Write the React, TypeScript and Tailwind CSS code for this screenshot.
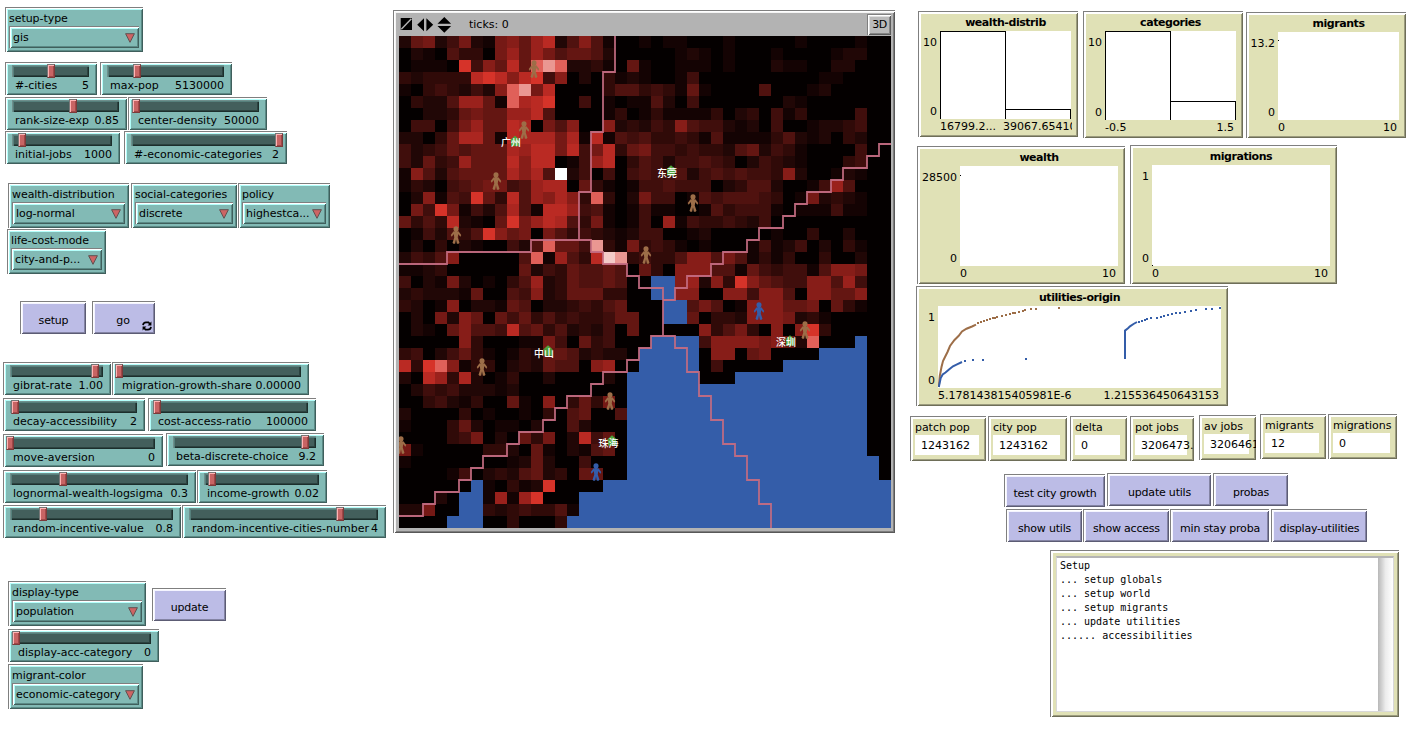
import React from "react";

const BEVEL_TEAL =
  "border-l border-t border-[#7f7f7f] bg-[#82bab5] shadow-[inset_1px_1px_0_#ffffff,inset_-1px_-1px_0_#3f5f5c,inset_2px_2px_0_#b4fffb,inset_-2px_-2px_0_#5b8a86]";
const BEVEL_LAVENDER =
  "border-l border-t border-[#7f7f7f] bg-[#bcbce6] shadow-[inset_1px_1px_0_#ffffff,inset_-1px_-1px_0_#5c5c74,inset_2px_2px_0_#f4f4ff,inset_-2px_-2px_0_#8484a4]";
const BEVEL_KHAKI =
  "border-l border-t border-[#7f7f7f] bg-[#e0e1b6] shadow-[inset_1px_1px_0_#ffffff,inset_-1px_-1px_0_#6e6e58,inset_2px_2px_0_#ffffff,inset_-2px_-2px_0_#9c9c7e]";

function Row({ className, children }: { className: string; children: React.ReactNode }) {
  return <div className={`flex items-start ${className}`}>{children}</div>;
}

function Slider({ label, value, pos, className }: { label: string; value: string; pos: number; className: string }) {
  return (
    <div className={`relative h-[33px] shrink-0 pl-[6px] pr-[8px] pt-[2px] ${BEVEL_TEAL} ${className}`}>
      <div className="h-[12px] border-l border-t border-[#6f8f8c] bg-[#435f5c] shadow-[inset_1px_1px_0_#56807c,inset_-1px_-1px_0_#1c2e2c,inset_-2px_-2px_0_#2c4340]" />
      <div
        className="absolute top-[1px] h-[14px] w-[8px] border border-t-[#777] border-l-[#777] border-r-[#7c3a3a] border-b-[#7c3a3a] bg-[#c86464] shadow-[inset_1px_1px_0_#ffb4b4,inset_-1px_-1px_0_#a04848]"
        style={{ left: pos - 1 }}
      />
      <div className="flex justify-between whitespace-nowrap pl-[3px] pt-[2px] leading-[14px] tracking-normal">
        <span>{label}</span>
        <span>{value}</span>
      </div>
    </div>
  );
}

function Chooser({ label, value, className }: { label: string; value: string; className: string }) {
  return (
    <div className={`h-[45px] shrink-0 px-[3px] pr-[4px] pt-[3px] ${BEVEL_TEAL} ${className}`}>
      <div className="h-[15px] pt-px leading-[14px]">{label}</div>
      <div className={`flex h-[22px] items-start justify-between pl-[3px] pr-[4px] ${BEVEL_TEAL}`}>
        <span className="mt-[4px] leading-[14px]">{value}</span>
        <svg className="mt-[6px] shrink-0" width="10" height="10" viewBox="0 0 10 10">
          <path d="M0.6 0.7H9.4L5 9.3Z" fill="#cd6464" stroke="#5f5050" />
        </svg>
      </div>
    </div>
  );
}

function Button({ label, className, children }: { label: string; className: string; children?: React.ReactNode }) {
  return (
    <button
      type="button"
      className={`relative flex h-[33px] shrink-0 items-center justify-center whitespace-nowrap pt-[5px] leading-[14px] tracking-[-0.2px] ${BEVEL_LAVENDER} ${className}`}
    >
      {label}
      {children}
    </button>
  );
}

function Monitor({ label, value, className }: { label: string; value: string; className: string }) {
  return (
    <div className={`h-[45px] shrink-0 overflow-hidden pl-[4px] pr-[7px] pt-[3px] ${BEVEL_KHAKI} ${className}`}>
      <div className="h-[15px] whitespace-nowrap pt-px leading-[14px]">{label}</div>
      <div className="h-[20px] whitespace-nowrap bg-white pl-[6px] pt-[4px] leading-[14px] tracking-normal">{value}</div>
    </div>
  );
}

type PlotProps = {
  title: string;
  yMax: string;
  yMin: string;
  xMin: string;
  xMax: string;
  className: string;
  axis: string;
  xEnd?: string;
  children?: React.ReactNode;
};

function Plot({ title, yMax, yMin, xMin, xMax, className, axis, xEnd = "mr-[9px]", children }: PlotProps) {
  return (
    <div className={`flex shrink-0 overflow-hidden ${BEVEL_KHAKI} ${className}`}>
      <div className={`flex shrink-0 flex-col items-end justify-between pb-[18px] pr-[3px] pt-[24px] leading-[14px] tracking-normal ${axis}`}>
        <span>{yMax}</span>
        <span>{yMin}</span>
      </div>
      <div className="flex min-w-0 grow flex-col">
        <div className="mr-[7px] h-[19px] shrink-0 pt-[4px] text-center font-bold leading-[14px] tracking-[-0.45px]">{title}</div>
        <div className="mr-[7px] flex grow items-end bg-white">{children}</div>
        <div className={`flex h-[18px] shrink-0 justify-between overflow-hidden whitespace-nowrap pt-[1px] leading-[14px] tracking-normal ${xEnd}`}>
          <span>{xMin}</span>
          <span>{xMax}</span>
        </div>
      </div>
    </div>
  );
}

const CELLS = [
  "267247217869b25851001" + "01100010000010000100",
  "021053307969756652000" + "00121010001000012200",
  "01110c486b6ded2231061" + "00111010002110022000",
  "323333bcb8bc480203121" + "00140000000000110000",
  "103432428de7b00003553" + "43161000050001200000",
  "032259961dabc00401011" + "52040000000210000000",
  "00223676699b500001301" + "31111302304130000400",
  "044047966ba0758008232" + "43854421204001223400",
  "22036aa61baaa7a1b1545" + "33431511113521203200",
  "423465666a9bb7b47b367" + "44343325624310000400",
  "426349666b8bb0149b035" + "42445430243210003400",
  "185256666a8a5f2404045" + "44524545443820012100",
  "132045677459aa0631014" + "45444023552001495000",
  "028154c63b598a83d3027" + "44015455543017232100",
  "074c71425a51bb9451014" + "11001534441011141100",
  "6353b2106c79ba5371014" + "09143343240000000000",
  "0142535c8670753432124" + "40012000001003002000",
  "020302100425d664e3173" + "43101000141240203100",
  "24358000005d1953bwe34" + "33588575131300300200",
  "112300000062436556506" + "30888551643441588700",
  "402172010359236556500" + "BB89283c865448859400",
  "232221600548236663300" + "BB880088488508866800",
  "320180221650223435600" + "0BB57501888667063100",
  "020728606463534334660" + "0BB60332888723100000",
  "021068554b56352324060" + "0000835730808c300000",
  "000008300011740634000" + "BBBB48888786" + "2d000B00",
  "34024631013266523220B" + "BBBB0880670000BBBB00",
  "b3cd8133023265508900B" + "BBBB0400000BBBBBBB00",
  "20b93a2013002000020BB" + "BBBB000BBBBBBBBBBB00",
  "0243422212000000000BB" + "BBBBBBBBBBBBBBBBBB00",
  "0034213006108036370BB" + "BBBBBBBBBBBBBBBBBB00",
  "2000030100103056005BB" + "BBBBBBBBBBBBBBBBBB00",
  "1000362011020052000BB" + "BBBBBBBBBBBBBBBBBB00",
  "000034702063702b460BB" + "BBBBBBBBBBBBBBBBBB00",
  "7100000332061021560BB" + "BBBBBBBBBBBBBBBBBB00",
  "1000000001262004000BB" + "BBBBBBBBBBBBBBBBBBB0",
  "0000140232562306600BB" + "BBBBBBBBBBBBBBBBBBB0",
  "000000B10312c0000BBBB" + "BBBBBBBBBBBBBBBBBBBB",
  "00020BB1919c000BBBBBB" + "BBBBBBBBBBBBBBBBBBBB",
  "22700BB32343351BBBBBB" + "BBBBBBBBBBBBBBBBBBBB",
  "0000BBB0030003BBBBBBB" + "BBBBBBBBBBBBBBBBBBBB",
];

const SHADES: Record<string, string> = {
  "0": "#040000",
  "1": "#140303",
  "2": "#210706",
  "3": "#300a08",
  "4": "#400e0c",
  "5": "#50120f",
  "6": "#641612",
  "7": "#751915",
  "8": "#871d18",
  "9": "#9a211c",
  a: "#ab2620",
  b: "#ba2a23",
  c: "#d63329",
  d: "#e06059",
  e: "#ea9792",
  w: "#f4cbc8",
  f: "#ffffff",
  B: "#345da9",
};

const BORDERS = [
  "18,0 18,3 17,3 17,8 16,8 16,13 15,13 15,17",
  "0,19 4,19 4,18 11,18 11,17 16,17 16,18 17,18 17,19 19,19 19,20 20,20 20,21 22,21 22,25",
  "22,22 23,22 23,21 24,21 24,20 26,20 26,19 27,19 27,18 29,18 29,17 30,17 30,16 32,16 32,15 33,15 33,14 34,14 34,13 36,13 36,12 37,12 37,11 39,11 39,10 40,10 40,9 41,9",
  "0,40 2,40 2,39 3,39 3,38 5,38 5,37 6,37 6,36 7,36 7,35 9,35 9,34 10,34 10,33 12,33 12,32 13,32 13,31 14,31 14,30 16,30 16,29 17,29 17,28 19,28 19,27 20,27 20,26 21,26 21,25 23,25 23,26 24,26 24,28 25,28 25,30 26,30 26,32 27,32 27,34 28,34 28,35 29,35 29,37 30,37 30,39 31,39 31,41",
];

const BROWN = "#9d6e48";
const BLUE = "#345da9";

const MIGRANTS: [number, number, string][] = [
  [135, 33, BROWN],
  [125, 94, BROWN],
  [97, 145, BROWN],
  [57, 199, BROWN],
  [247, 219, BROWN],
  [294, 167, BROWN],
  [360, 275, BLUE],
  [406, 294, BROWN],
  [83, 331, BROWN],
  [211, 365, BROWN],
  [2, 409, BROWN],
  [197, 436, BLUE],
];

const CITIES: [string, number, number, number, number][] = [
  ["广州", 116, 105, 112, 109.5],
  ["东莞", 272, 134.5, 268, 141],
  ["中山", 149, 314.5, 145, 321],
  ["珠海", 213, 404.5, 209.5, 411],
  ["深圳", 391, 304.5, 387, 310],
];

function Person({ x, y, color }: { x: number; y: number; color: string }) {
  return (
    <g transform={`translate(${x - 8.7} ${y - 8.7}) scale(0.058)`} fill={color}>
      <circle cx="150" cy="45" r="44" />
      <path d="M105 90 120 195 90 285 105 300H135L150 225 165 300H195L210 285 180 195 195 90Z" />
      <path d="M127 75H172V98H127Z" />
      <path d="M195 90 240 150 225 180 165 105Z" />
      <path d="M105 90 60 150 75 180 135 105Z" />
    </g>
  );
}

function WorldMap() {
  return (
    <svg className="block" width="492" height="492" viewBox="0 0 492 492">
      <rect width="492" height="492" fill="#040000" />
      <g shapeRendering="crispEdges">
        {CELLS.map((row, r) =>
          row.split("").map((c, i) =>
            c === "0" ? null : <rect key={`${r}-${i}`} x={i * 12} y={r * 12} width="12" height="12" fill={SHADES[c]} />
          )
        )}
      </g>
      <g transform="scale(12)" fill="none" stroke="#c46c82" strokeOpacity="0.95" strokeWidth="0.15">
        {BORDERS.map((points) => (
          <polyline key={points} points={points} />
        ))}
      </g>
      {CITIES.map(([name, hx, hy]) => (
        <g key={name} transform={`translate(${hx - 5.7} ${hy - 5.7}) scale(0.038)`} fill="#4fa33c">
          <path d="M45 120H255V285H45Z" />
          <path d="M15 130 150 10 285 130Z" />
        </g>
      ))}
      {MIGRANTS.map(([x, y, color]) => (
        <Person key={`${x}-${y}`} x={x} y={y} color={color} />
      ))}
      {CITIES.map(([name, , , lx, ly]) => (
        <text
          key={name}
          x={lx}
          y={ly}
          fill="#ffffff"
          textAnchor="middle"
          className="font-['Noto_Sans_CJK_SC',sans-serif] text-[10px] font-medium tracking-normal"
        >
          {name}
        </text>
      ))}
    </svg>
  );
}

function World() {
  return (
    <div className="mt-[10px] h-[523px] w-[502px] shrink-0 border-l border-t border-[#7f7f7f] bg-[#b3b3b3] pl-[5px] pr-[4px] pt-[2px] shadow-[inset_1px_1px_0_#ffffff,inset_-1px_-1px_0_#585858,inset_2px_2px_0_#f4f4f4,inset_-2px_-2px_0_#7d7d7d]">
      <div className="flex h-[23px] items-start">
        <svg className="mt-[4px] block" width="54" height="16" viewBox="0 0 54 16">
          <rect x="1.7" y="1" width="11.3" height="12" />
          <path d="M2.3 12.3 12.4 1.7" stroke="#b3b3b3" strokeWidth="1.4" />
          <path d="M25 1.2V14.3L18.2 7.75ZM27.4 1.2V14.3L34.2 7.75Z" />
          <path d="M38.5 6.7 45.3 0 52.1 6.7ZM38.5 9H52.1L45.3 15.7Z" />
        </svg>
        <span className="ml-[16px] mt-[5px] leading-[14px] tracking-normal">ticks: 0</span>
        <button
          type="button"
          className="ml-auto mt-[1px] h-[21px] w-[24px] border-l border-t border-[#7f7f7f] bg-[#bababa] leading-[18px] tracking-[-0.4px] shadow-[inset_1px_1px_0_#ffffff,inset_-1px_-1px_0_#5c5c5c,inset_2px_2px_0_#dedede,inset_-2px_-2px_0_#858585]"
        >
          3D
        </button>
      </div>
      <WorldMap />
    </div>
  );
}

const path = (s: string) => s.split(" ").map((p) => p.split(",").map(Number) as [number, number]);

const CURVES = [
  {
    color: BROWN,
    line: "0.8,81 1.8,70 3.5,61 5,55 7,51 9.5,46 12,40 16.5,34 20.5,30 24,25.5 28.5,22.7 34,20.5 38,18.7",
    dots: path("40,16.5 43,15.5 45.5,15 49,14 52,12.5 54.5,11.8 57,11.6 59,11 64,9.7 68,8.7 72,7.7 75,7 77,6.6 81,5.7 85,4.7 87,3.8 93,3 98,3 121,2"),
  },
  {
    color: BLUE,
    line: "0.8,81 2.7,72 4.7,68.5 7.5,66.5 11,63.5 15,60.3 19,58.3 24,56",
    dots: path("27,54.6 35,54 45,54 88,53"),
  },
  {
    color: BLUE,
    line: "187,53 187,24.6 190,22.3 192,20.3 195.5,18 199,16",
    dots: path("201,16 204,15 206.5,13.7 209,12.7 213,12 219,12 223,11 226,9.7 230,8.7 234,7.7 238,7 242,7 247,6 253,5 258,4 268,3 274,3 282,2"),
  },
];

function UtilityCurves() {
  return (
    <svg className="block" width="283" height="82" viewBox="0 0 283 82">
      {CURVES.map((c, i) => (
        <g key={i}>
          <polyline points={c.line} fill="none" stroke={c.color} strokeWidth="2" />
          {c.dots.map(([x, y]) => (
            <rect key={x} x={Math.round(x) - 1} y={Math.round(y) - 1} width="2" height="2" fill={c.color} />
          ))}
        </g>
      ))}
    </svg>
  );
}

const LOG = ["Setup", "... setup globals", "... setup world", "... setup migrants", "... update utilities", "...... accessibilities"];

export default function App() {
  return (
    <div className="flex h-[729px] w-[1415px] items-start overflow-hidden bg-white font-['DejaVu_Sans','Noto_Sans_CJK_SC',sans-serif] text-[11px] tracking-[-0.05px] text-black">
      <div className="w-[393px] shrink-0">
        <Row className="mt-[7px]">
          <Chooser label="setup-type" value="gis" className="ml-[5px] w-[138px]" />
        </Row>
        <Row className="mt-[10px]">
          <Slider label="#-cities" value="5" pos={42} className="ml-[5px] w-[92px]" />
          <Slider label="max-pop" value="5130000" pos={33} className="ml-[3px] w-[132px]" />
        </Row>
        <Row className="mt-[2px]">
          <Slider label="rank-size-exp" value="0.85" pos={64} className="ml-[5px] w-[122px]" />
          <Slider label="center-density" value="50000" pos={4} className="ml-[1px] w-[139px]" />
        </Row>
        <Row className="mt-[1px]">
          <Slider label="initial-jobs" value="1000" pos={13} className="ml-[5px] w-[115px]" />
          <Slider label="#-economic-categories" value="2" pos={151} className="ml-[4px] w-[163px]" />
        </Row>
        <Row className="mt-[19px]">
          <Chooser label="wealth-distribution" value="log-normal" className="ml-[8px] w-[121px]" />
          <Chooser label="social-categories" value="discrete" className="ml-[2px] w-[106px]" />
          <Chooser label="policy" value="highestca..." className="ml-[1px] w-[92px]" />
        </Row>
        <Row className="mt-[1px]">
          <Chooser label="life-cost-mode" value="city-and-p..." className="ml-[7px] w-[99px]" />
        </Row>
        <Row className="mt-[27px]">
          <Button label="setup" className="ml-[20px] w-[66px]" />
          <Button label="go" className="ml-[6px] w-[63px] pr-[2px]">
            <svg className="absolute bottom-[3px] right-[3px]" width="10" height="10" viewBox="0 0 10 10" fill="none" stroke="#000" strokeWidth="1.7">
              <path d="M1 4.2C1.3 2 2.5 1.4 4 1.4H6.5L8 3M9 5.8C8.7 8 7.5 8.6 6 8.6H3.5L2 7" />
              <path d="M5.6 4.4H9.4V0.6ZM4.4 5.6H0.6V9.4Z" fill="#000" stroke="none" />
            </svg>
          </Button>
        </Row>
        <Row className="mt-[28px]">
          <Slider label="gibrat-rate" value="1.00" pos={88} className="ml-[3px] w-[108px]" />
          <Slider label="migration-growth-share" value="0.00000" pos={3} className="ml-[1px] w-[197px]" />
        </Row>
        <Row className="mt-[3px]">
          <Slider label="decay-accessibility" value="2" pos={8} className="ml-[3px] w-[142px]" />
          <Slider label="cost-access-ratio" value="100000" pos={5} className="ml-[3px] w-[168px]" />
        </Row>
        <Row className="mt-[2px]">
          <Slider label="move-aversion" value="0" pos={3} className="ml-[3px] mt-[1px] w-[160px]" />
          <Slider label="beta-discrete-choice" value="9.2" pos={135} className="ml-[3px] w-[158px]" />
        </Row>
        <Row className="mt-[3px]">
          <Slider label="lognormal-wealth-logsigma" value="0.3" pos={56} className="ml-[3px] w-[193px]" />
          <Slider label="income-growth" value="0.02" pos={11} className="ml-[1px] w-[130px]" />
        </Row>
        <Row className="mt-[2px]">
          <Slider label="random-incentive-value" value="0.8" pos={36} className="ml-[3px] w-[178px]" />
          <Slider label="random-incentive-cities-number" value="4" pos={154} className="ml-[1px] w-[204px]" />
        </Row>
        <Row className="mt-[43px]">
          <Chooser label="display-type" value="population" className="ml-[8px] w-[138px]" />
          <Button label="update" className="ml-[6px] mt-[7px] w-[74px]" />
        </Row>
        <Row className="mt-[3px]">
          <Slider label="display-acc-category" value="0" pos={4} className="ml-[8px] w-[151px]" />
        </Row>
        <Row className="mt-[2px]">
          <Chooser label="migrant-color" value="economic-category" className="ml-[8px] w-[135px]" />
        </Row>
      </div>

      <World />

      <div className="w-[520px] shrink-0">
        <Row className="mt-[11px]">
          <Plot
            title="wealth-distrib"
            yMax="10"
            yMin="0"
            xMin="16799.2..."
            xMax="39067.65410"
            axis="w-[21px]"
            xEnd="mr-[6px] gap-[7px]"
            className="ml-[23px] h-[126px] w-[160px]"
          >
            <div className="h-full w-[66px] border border-b-0 border-black" />
            <div className="h-[10px] grow border-r border-t border-black" />
          </Plot>
          <Plot title="categories" yMax="10" yMin="0" xMin="-0.5" xMax="1.5" axis="w-[21px]" className="ml-[5px] h-[127px] w-[160px]">
            <div className="h-full w-[66px] border border-b-0 border-black" />
            <div className="h-[19px] grow border-r border-t border-black" />
          </Plot>
          <Plot title="migrants" yMax="13.2" yMin="0" xMin="0" xMax="10" axis="w-[31px]" className="ml-[3px] mt-[1px] h-[126px] w-[160px]">
            <div className="mt-[8px] size-px self-start bg-black" />
          </Plot>
        </Row>
        <Row className="mt-[7px]">
          <Plot title="wealth" yMax="28500" yMin="0" xMin="0" xMax="10" axis="w-[42px]" className="ml-[22px] mt-[1px] h-[138px] w-[208px]">
            <div className="mt-[9px] size-px self-start bg-black" />
          </Plot>
          <Plot title="migrations" yMax="1" yMin="0" xMin="0" xMax="10" axis="w-[21px]" className="ml-[5px] h-[139px] w-[207px]">
            <div className="size-px bg-black" />
          </Plot>
        </Row>
        <Row className="mt-[2px]">
          <Plot
            title="utilities-origin"
            yMax="1"
            yMin="0"
            xMin="5.178143815405981E-6"
            xMax="1.215536450643153"
            axis="w-[21px]"
            className="ml-[21px] h-[120px] w-[312px]"
          >
            <UtilityCurves />
          </Plot>
        </Row>
        <Row className="mt-[8px]">
          <Monitor label="patch pop" value="1243162" className="ml-[15px] mt-[2px] w-[76px]" />
          <Monitor label="city pop" value="1243162" className="ml-[2px] mt-[2px] w-[79px]" />
          <Monitor label="delta" value="0" className="ml-[3px] mt-[2px] w-[57px]" />
          <Monitor label="pot jobs" value="3206473." className="ml-[3px] mt-[2px] w-[64px]" />
          <Monitor label="av jobs" value="3206461" className="ml-[5px] mt-[1px] w-[57px]" />
          <Monitor label="migrants" value="12" className="ml-[4px] w-[66px]" />
          <Monitor label="migrations" value="0" className="ml-[2px] w-[69px]" />
        </Row>
        <Row className="mt-[12px]">
          <Button label="test city growth" className="ml-[109px] mt-[1px] w-[101px]" />
          <Button label="update utils" className="ml-[2px] w-[104px]" />
          <Button label="probas" className="ml-[2px] w-[75px]" />
        </Row>
        <Row className="mt-[2px]">
          <Button label="show utils" className="ml-[111px] w-[76px]" />
          <Button label="show access" className="ml-[1px] w-[86px]" />
          <Button label="min stay proba" className="ml-[1px] w-[99px]" />
          <Button label="display-utilities" className="ml-[2px] w-[96px]" />
        </Row>
        <div className={`ml-[155px] mt-[8px] flex h-[167px] w-[349px] px-[5px] pb-[5px] pt-[5px] ${BEVEL_KHAKI}`}>
          <div className="flex grow border border-t-2 border-[#d8d8d8] border-t-[#b4b4b4] bg-white">
            <div className="grow pl-[3px] pt-px font-['DejaVu_Sans_Mono',monospace] text-[10px] leading-[14px] tracking-normal">
              {LOG.map((line) => (
                <div key={line}>{line}</div>
              ))}
            </div>
            <div className="w-[15px] bg-gradient-to-r from-[#b8b8b8] via-[#ececec] to-white" />
          </div>
        </div>
      </div>
    </div>
  );
}
